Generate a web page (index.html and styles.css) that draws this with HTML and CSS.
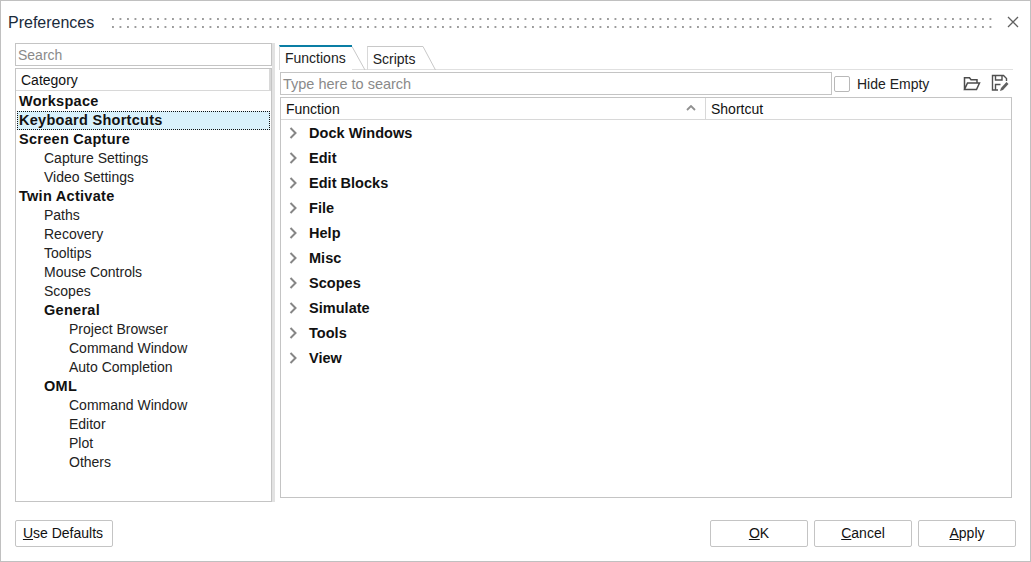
FILE: index.html
```html
<!DOCTYPE html>
<html lang="en">
<head>
<meta charset="utf-8">
<title>Preferences</title>
<link rel="stylesheet" href="styles.css">
</head>
<body>
<div class="window">
  <header class="titlebar">
    <span class="title">Preferences</span>
    <div class="grip"></div>
    <svg class="close" width="12" height="12" viewBox="0 0 12 12"><path d="M1 1l10 10M11 1L1 11" stroke="#606060" stroke-width="1.300" fill="none"/></svg>
  </header>
  <main class="content">
    <section class="left">
      <div class="left-search">Search</div>
      <div class="tree">
        <div class="tree-head">Category</div>
        <div class="tree-body">
          <div class="node l0 bold">Workspace</div>
          <div class="node l0 bold selected">Keyboard Shortcuts</div>
          <div class="node l0 bold">Screen Capture</div>
          <div class="node l1">Capture Settings</div>
          <div class="node l1">Video Settings</div>
          <div class="node l0 bold">Twin Activate</div>
          <div class="node l1">Paths</div>
          <div class="node l1">Recovery</div>
          <div class="node l1">Tooltips</div>
          <div class="node l1">Mouse Controls</div>
          <div class="node l1">Scopes</div>
          <div class="node l1 bold">General</div>
          <div class="node l2">Project Browser</div>
          <div class="node l2">Command Window</div>
          <div class="node l2">Auto Completion</div>
          <div class="node l1 bold">OML</div>
          <div class="node l2">Command Window</div>
          <div class="node l2">Editor</div>
          <div class="node l2">Plot</div>
          <div class="node l2">Others</div>
        </div>
      </div>
    </section>
    <div class="splitter"></div>
    <section class="right">
      <div class="tabs">
        <div class="tab active">Functions<svg class="tab-edge" width="14" height="24" viewBox="0 0 14 24"><path d="M0 .5L13 24" stroke="#c8c8c8" fill="none"/></svg></div>
        <div class="tab">Scripts<svg class="tab-edge" width="14" height="24" viewBox="0 0 14 24"><path d="M0 .5L12.500 24" stroke="#c8c8c8" fill="none"/></svg></div>
      </div>
      <div class="toolbar">
        <div class="fn-search">Type here to search</div>
        <span class="check"></span>
        <span class="check-label">Hide Empty</span>
        <svg class="tool-open" width="18" height="15" viewBox="0 0 18 15"><path d="M1.500 13.500V1.800h5l1.500 2h6v3M1.500 13.500h12l3-6.500H4.500l-3 6.500z" stroke="#4c4c4c" stroke-width="1.500" fill="none"/></svg>
        <svg class="tool-save" width="18" height="18" viewBox="0 0 18 18"><path d="M7 16H1.500V1.500h11l3 3V7M4.500 1.500v4.500h6.500V1.500M4.500 16v-5.500h5" stroke="#505050" stroke-width="1.400" fill="none"/><path d="M9 17l1-3 5.500-6 2 2-5.500 6z" fill="#606060"/></svg>
      </div>
      <div class="table">
        <div class="table-head">
          <div class="col-fn">Function<svg class="sort" width="10" height="6" viewBox="0 0 10 6"><path d="M1 5l4-4 4 4" stroke="#909090" stroke-width="1.800" fill="none"/></svg></div>
          <div class="col-sc">Shortcut</div>
        </div>
        <div class="rows">
          <div class="row"><svg class="chev" width="8" height="12" viewBox="0 0 8 12"><path d="M1.500 1l5 5-5 5" stroke="#868686" stroke-width="2" fill="none"/></svg><b>Dock Windows</b></div>
          <div class="row"><svg class="chev" width="8" height="12" viewBox="0 0 8 12"><path d="M1.500 1l5 5-5 5" stroke="#868686" stroke-width="2" fill="none"/></svg><b>Edit</b></div>
          <div class="row"><svg class="chev" width="8" height="12" viewBox="0 0 8 12"><path d="M1.500 1l5 5-5 5" stroke="#868686" stroke-width="2" fill="none"/></svg><b>Edit Blocks</b></div>
          <div class="row"><svg class="chev" width="8" height="12" viewBox="0 0 8 12"><path d="M1.500 1l5 5-5 5" stroke="#868686" stroke-width="2" fill="none"/></svg><b>File</b></div>
          <div class="row"><svg class="chev" width="8" height="12" viewBox="0 0 8 12"><path d="M1.500 1l5 5-5 5" stroke="#868686" stroke-width="2" fill="none"/></svg><b>Help</b></div>
          <div class="row"><svg class="chev" width="8" height="12" viewBox="0 0 8 12"><path d="M1.500 1l5 5-5 5" stroke="#868686" stroke-width="2" fill="none"/></svg><b>Misc</b></div>
          <div class="row"><svg class="chev" width="8" height="12" viewBox="0 0 8 12"><path d="M1.500 1l5 5-5 5" stroke="#868686" stroke-width="2" fill="none"/></svg><b>Scopes</b></div>
          <div class="row"><svg class="chev" width="8" height="12" viewBox="0 0 8 12"><path d="M1.500 1l5 5-5 5" stroke="#868686" stroke-width="2" fill="none"/></svg><b>Simulate</b></div>
          <div class="row"><svg class="chev" width="8" height="12" viewBox="0 0 8 12"><path d="M1.500 1l5 5-5 5" stroke="#868686" stroke-width="2" fill="none"/></svg><b>Tools</b></div>
          <div class="row"><svg class="chev" width="8" height="12" viewBox="0 0 8 12"><path d="M1.500 1l5 5-5 5" stroke="#868686" stroke-width="2" fill="none"/></svg><b>View</b></div>
        </div>
      </div>
    </section>
  </main>
  <footer class="footer">
    <button class="btn defaults"><u>U</u>se Defaults</button>
    <div class="actions">
      <button class="btn"><u>O</u>K</button>
      <button class="btn"><u>C</u>ancel</button>
      <button class="btn"><u>A</u>pply</button>
    </div>
  </footer>
</div>
</body>
</html>
```
FILE: styles.css
```css
* { box-sizing: border-box; }
html, body { margin: 0; height: 100%; background: #fff; overflow: hidden; }
body { font-family: "Liberation Sans", Arial, sans-serif; font-size: 14px; color: #111; }
.window { width: 1031px; height: 562px; border: 1px solid #c0c0c0; display: flex; flex-direction: column; background: #fff; }
.titlebar { height: 42px; flex: none; display: flex; align-items: center; padding: 0 11px 0 7px; }
.title { font-size: 16px; color: #1a2a3a; width: 104px; flex: none; margin-top: 1px; }
.grip { flex: none; width: 881px; height: 10px; margin-top: 2px;
  background-image: conic-gradient(from 270deg at 2px 2px, #9c9c9c 25%, transparent 0);
  background-size: 7.500px 8px; }
.close { margin-left: 14px; flex: none; }
.content { display: flex; flex: none; height: 460px; padding-left: 14px; }
.left { width: 257px; flex: none; display: flex; flex-direction: column; gap: 2px; }
.left-search { height: 23px; border: 1px solid #c4c4c4; color: #8a8a8a; padding: 3px 2px; line-height: 17px; }
.tree { height: 434px; border: 1px solid #c4c4c4; }
.tree-head { height: 22px; border-bottom: 1px solid #d8d8d8; border-right: 2px solid #d8d8d8; padding-left: 5px; line-height: 22px; }
.tree-body { padding: 1px 0 0 0; }
.node { height: 19px; line-height: 19px; white-space: nowrap; color: #222; }
.bold { font-weight: 700; color: #111; font-size: 14.5px; letter-spacing: .28px; }
.l0 { padding-left: 3px; }
.l1 { padding-left: 28px; }
.l2 { padding-left: 53px; }
.selected { background: #d9f1fb; outline: 1px dotted #111; outline-offset: -1px; margin: 0 1px 0 1px; padding-left: 2px; }
.splitter { width: 3px; flex: none; background: #e2e2e2; margin: 0 5px 0 0; height: 459px; }
.right { width: 733px; flex: none; display: flex; flex-direction: column; padding-top: 2px; }
.tabs { height: 25px; flex: none; display: flex; border-bottom: 1px solid #e0e0e0; margin-left: -1px; }
.tab { position: relative; height: 24px; padding: 4px 7px 0 5px; color: #222; line-height: 17px; margin-right: 15px; margin-top: 1px; border-top: 1px solid #c8c8c8; border-left: 1px solid #d8d8d8; }
.tab.active { border-top: 2px solid #0a7ea4; margin-top: 0; padding: 3px 6px 0 5px; height: 25px; background: #fff; }
.tab-edge { position: absolute; left: 100%; top: -1px; }
.toolbar { height: 27px; flex: none; display: flex; align-items: center; }
.fn-search { width: 552px; height: 23px; flex: none; border: 1px solid #c4c4c4; color: #8a8a8a; padding: 3px 2px; line-height: 17px; font-size: 14.5px; }
.check { width: 16px; height: 16px; flex: none; margin-left: 2px; border: 1px solid #b8b8b8; border-radius: 2px; background: #fff; }
.check-label { margin-left: 7px; width: 106px; flex: none; color: #222; }
.tool-open { flex: none; margin-top: -1px; }
.tool-save { flex: none; margin-left: 10px; margin-top: -1px; }
.table { height: 401px; flex: none; width: 732px; border: 1px solid #c4c4c4; }
.table-head { height: 22px; display: flex; border-bottom: 1px solid #d8d8d8; line-height: 22px; }
.col-fn { width: 425px; flex: none; padding-left: 5px; border-right: 1px solid #d8d8d8; position: relative; }
.sort { position: absolute; right: 9px; top: 7px; }
.col-sc { padding-left: 5px; }
.row { height: 25px; display: flex; align-items: center; padding-left: 8px; font-size: 14.5px; }
.row b { margin-left: 12px; color: #111; letter-spacing: .03px; }
.chev { flex: none; }
.footer { display: flex; justify-content: space-between; padding: 17px 14px 0; }
.btn { width: 98px; height: 27px; padding: 0 0 2px; background: #fff; border: 1px solid #c4c4c4; border-radius: 2px; font: 14px "Liberation Sans", Arial, sans-serif; color: #111; }
.defaults { padding-right: 2px; }
.actions { display: flex; gap: 6px; }
```
